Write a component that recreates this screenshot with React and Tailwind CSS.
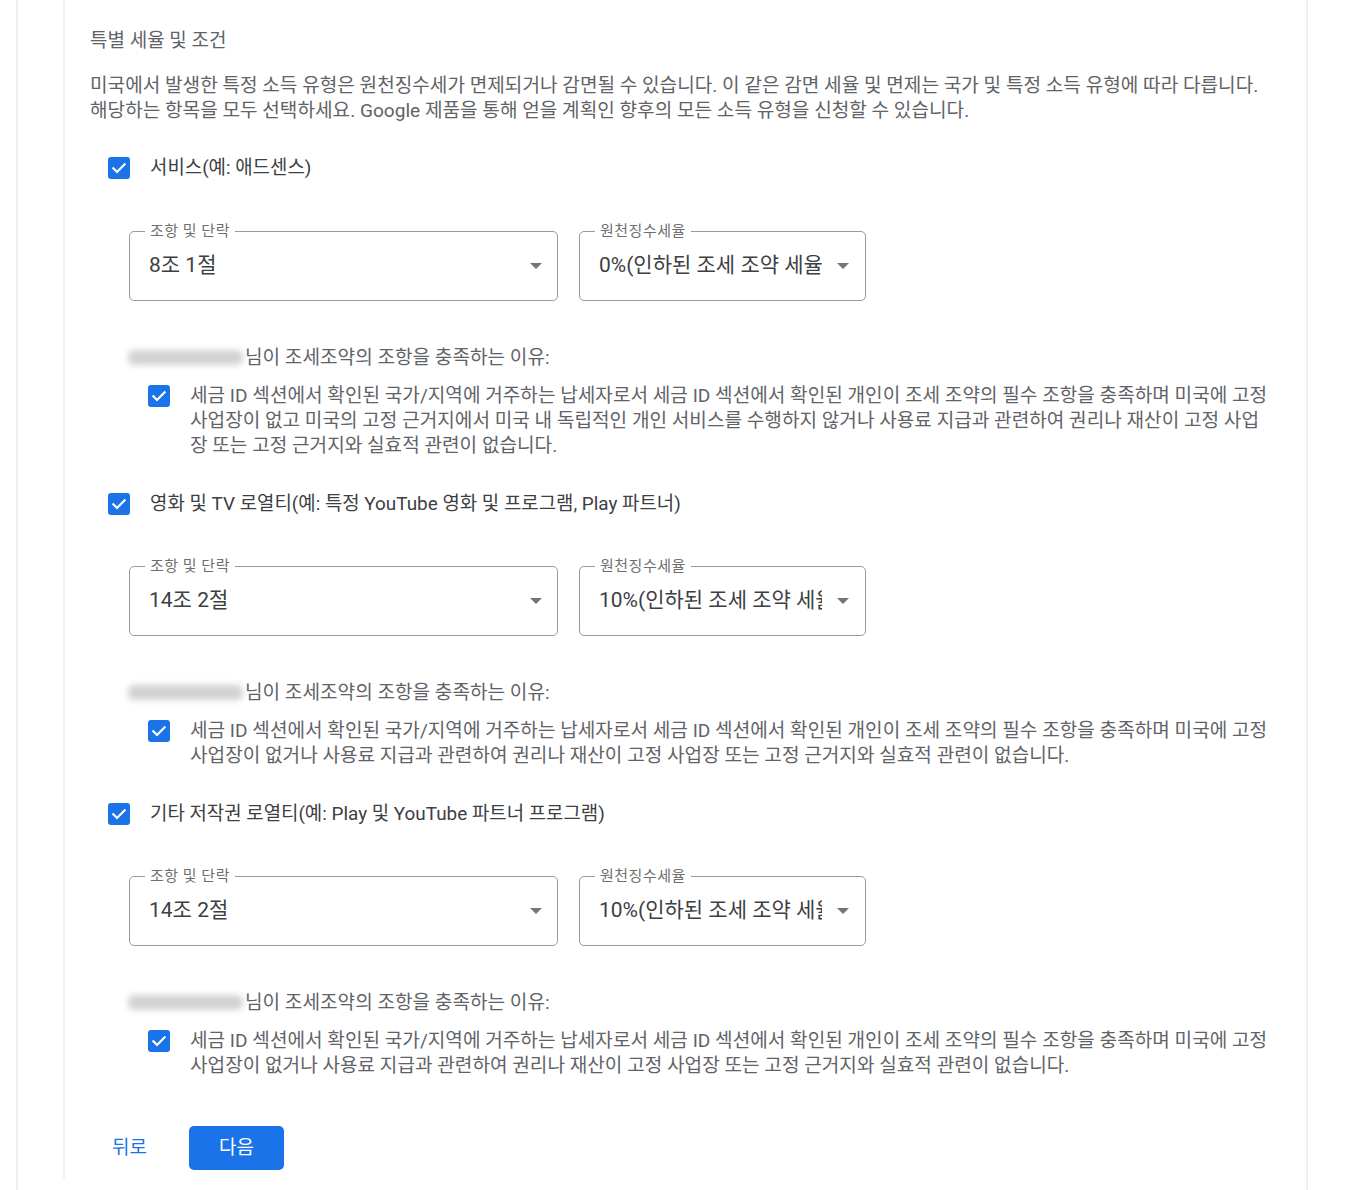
import React from "react";

const FONT = { fontFamily: "Roboto, 'Noto Sans CJK KR', 'Noto Sans', sans-serif" };

function Check() {
  return (
    <span className="flex h-[22px] w-[22px] shrink-0 items-center justify-center rounded-[3px] bg-[#1a73e8]">
      <svg viewBox="0 0 24 24" className="h-[20px] w-[20px]" fill="none">
        <path d="M5.2 12.4l4.4 4.4 9.2-9.4" stroke="#fff" strokeWidth="2.6" strokeLinecap="square" />
      </svg>
    </span>
  );
}

function Arrow() {
  return (
    <svg viewBox="0 0 12 6" className="h-[6px] w-[12px] shrink-0">
      <path d="M0 0h12L6 6z" fill="#757575" />
    </svg>
  );
}

function Field({ label, value, width, textWidth }) {
  return (
    <div className={`relative h-[70px] rounded-[5px] border border-[#9a9a9a] ${width}`}>
      <span className="absolute left-[15px] top-[-10px] bg-white px-[5px] text-[15px] leading-[18px] tracking-[0.5px] text-[#6f6f6f]">
        {label}
      </span>
      <div className="flex h-full items-center pl-[19px] pr-[15px]">
        <div className={`overflow-hidden whitespace-nowrap text-[21px] text-[#3c4043] ${textWidth}`}>{value}</div>
        <Arrow />
      </div>
    </div>
  );
}

function Section({ title, article, rate, reasonLines, first }) {
  return (
    <div className={first ? "mt-[32px]" : "mt-[33px]"}>
      <div className="flex h-[25px] items-center pl-[18px]">
        <Check />
        <span className="ml-[20px] text-[18.9px] leading-[25px] text-[#3c4043]">{title}</span>
      </div>
      <div className={`${first ? "mt-[51px]" : "mt-[50px]"} flex gap-[21px] pl-[39px]`}>
        <Field label="조항 및 단락" value={article} width="w-[429px]" textWidth="flex-1" />
        <Field label="원천징수세율" value={rate} width="w-[287px]" textWidth="w-[223px] mr-[15px]" />
      </div>
      <div className="mt-[44px] flex h-[25px] items-center pl-[38px] text-[19.1px] leading-[25px] text-[#5f6368]">
        <span className="mr-[2px] h-[15px] w-[115px] rounded-[6px] bg-[#d2d2d2] blur-[3px]" />
        <span>님이 조세조약의 조항을 충족하는 이유:</span>
      </div>
      <div className="mt-[13px] flex pl-[58px]">
        <div className="pt-[1.5px]">
          <Check />
        </div>
        <p className="ml-[20px] text-[19.1px] leading-[25px] text-[#5f6368]">{reasonLines}</p>
      </div>
    </div>
  );
}

export default function App() {
  const reasonA =
    "세금 ID 섹션에서 확인된 국가/지역에 거주하는 납세자로서 세금 ID 섹션에서 확인된 개인이 조세 조약의 필수 조항을 충족하며 미국에 고정 사업장이 없고 미국의 고정 근거지에서 미국 내 독립적인 개인 서비스를 수행하지 않거나 사용료 지급과 관련하여 권리나 재산이 고정 사업장 또는 고정 근거지와 실효적 관련이 없습니다.";
  const reasonB =
    "세금 ID 섹션에서 확인된 국가/지역에 거주하는 납세자로서 세금 ID 섹션에서 확인된 개인이 조세 조약의 필수 조항을 충족하며 미국에 고정 사업장이 없거나 사용료 지급과 관련하여 권리나 재산이 고정 사업장 또는 고정 근거지와 실효적 관련이 없습니다.";
  return (
    <div className="min-h-[1190px] bg-white" style={FONT}>
      <div className="ml-[16px] w-[1292px] min-h-[1190px] border-x-2 border-[#efefef] pl-[45px]">
        <div className="border-l-2 border-[#efefef] pl-[25px] pr-[34px] pb-[8px]">
          <h2 className="pt-[28px] text-[19px] font-normal leading-[25px] text-[#5f6368]">특별 세율 및 조건</h2>
          <p className="mt-[20px] text-[19.1px] leading-[25px] text-[#5f6368]">
            미국에서 발생한 특정 소득 유형은 원천징수세가 면제되거나 감면될 수 있습니다. 이 같은 감면 세율 및 면제는 국가 및 특정 소득 유형에 따라 다릅니다. 해당하는 항목을 모두 선택하세요. Google 제품을 통해 얻을 계획인 향후의 모든 소득 유형을 신청할 수 있습니다.
          </p>
          <Section first title="서비스(예: 애드센스)" article="8조 1절" rate="0%(인하된 조세 조약 세율)" reasonLines={reasonA} />
          <Section
            title="영화 및 TV 로열티(예: 특정 YouTube 영화 및 프로그램, Play 파트너)"
            article="14조 2절"
            rate="10%(인하된 조세 조약 세율)"
            reasonLines={reasonB}
          />
          <Section
            title="기타 저작권 로열티(예: Play 및 YouTube 파트너 프로그램)"
            article="14조 2절"
            rate="10%(인하된 조세 조약 세율)"
            reasonLines={reasonB}
          />
          <div className="mt-[48px] flex items-center gap-[20px]">
            <button className="h-[44px] rounded-[5px] px-[22px] text-[19px] text-[#1a73e8]">뒤로</button>
            <button className="h-[44px] w-[95px] rounded-[5px] bg-[#1a73e8] text-[19px] text-white">다음</button>
          </div>
        </div>
      </div>
    </div>
  );
}
